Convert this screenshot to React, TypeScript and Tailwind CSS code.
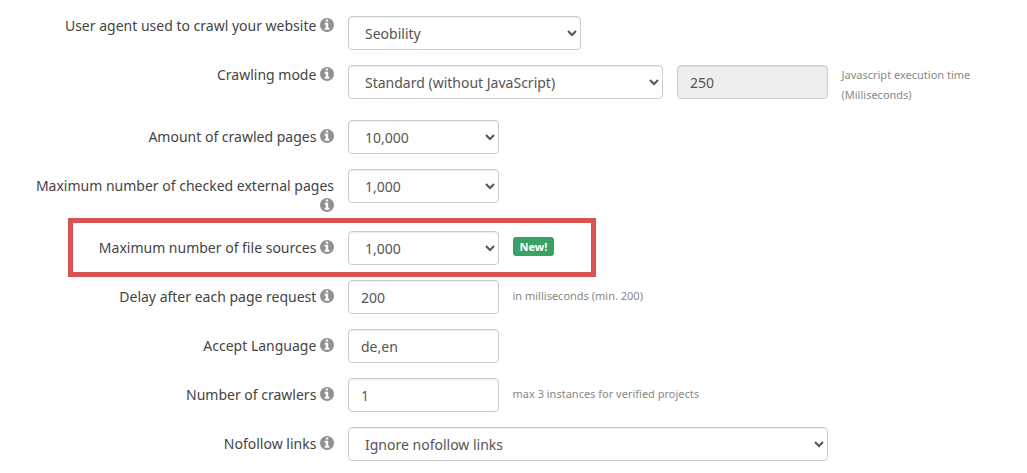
import React from "react";
import clsx from "clsx";

const controlClass =
  "block h-[34px] w-full rounded border border-[#ccc] bg-white px-3 py-1.5 text-sm text-[#555] shadow-[inset_0_1px_1px_rgba(0,0,0,0.075)] outline-none focus:border-[#66afe9] disabled:bg-[#eee]";

function InfoIcon() {
  return (
    <svg
      viewBox="0 128 1536 1536"
      className="inline-block size-3.5 align-[-1px] text-[#919191]"
      fill="currentColor"
      aria-hidden="true"
    >
      <path d="M1024 1376v-160q0-14-9-23t-23-9h-96v-512q0-14-9-23t-23-9h-320q-14 0-23 9t-9 23v160q0 14 9 23t23 9h96v320h-96q-14 0-23 9t-9 23v160q0 14 9 23t23 9h448q14 0 23-9t9-23zm-128-896v-160q0-14-9-23t-23-9h-192q-14 0-23 9t-9 23v160q0 14 9 23t23 9h192q14 0 23-9t9-23zm640 416q0 209-103 385.5t-279.5 279.5-385.5 103-385.5-103-279.5-279.5-103-385.5 103-385.5 279.5-279.5 385.5-103 385.5 103 279.5 279.5 103 385.5z" />
    </svg>
  );
}

type RowProps = {
  id: string;
  label: string;
  compact?: boolean;
  highlighted?: boolean;
  children: React.ReactNode;
};

function Row({ id, label, compact, highlighted, children }: RowProps) {
  return (
    <div className="relative grid grid-cols-12 items-start gap-x-3.5">
      <label
        htmlFor={id}
        className={clsx("col-span-4 text-right text-sm leading-5 text-[#444]", !compact && "pt-[7px]")}
      >
        {label} <InfoIcon />
      </label>
      {children}
      {highlighted && (
        <div className="pointer-events-none absolute -top-[13px] -right-[15px] -bottom-3 left-[49px] col-span-7 col-start-1 border-5 border-[#d9534f]" />
      )}
    </div>
  );
}

type SelectProps = { id: string; options: string[]; className: string };

function Select({ id, options, className }: SelectProps) {
  return (
    <div className={className}>
      <select id={id} className={controlClass}>
        {options.map((option) => (
          <option key={option}>{option}</option>
        ))}
      </select>
    </div>
  );
}

function TextField({ id, value }: { id: string; value: string }) {
  return (
    <div className="col-span-2">
      <input id={id} type="text" defaultValue={value} className={controlClass} />
    </div>
  );
}

function Hint({ className, children }: { className: string; children: React.ReactNode }) {
  return <p className={clsx("text-[11px] leading-5 text-[#888]", className)}>{children}</p>;
}

export default function App() {
  return (
    <form className="flex flex-col gap-[15px] bg-white pt-4 pr-[35px] pb-3 pl-[19px] font-['Noto_Sans',sans-serif]">
      <Row id="user-agent" label="User agent used to crawl your website" compact>
        <Select id="user-agent" className="col-span-3" options={["Seobility", "Googlebot", "Bingbot"]} />
      </Row>

      <Row id="crawling-mode" label="Crawling mode" compact>
        <Select
          id="crawling-mode"
          className="col-span-4"
          options={["Standard (without JavaScript)", "With JavaScript"]}
        />
        <div className="col-span-2">
          <input
            type="text"
            defaultValue="250"
            disabled
            aria-label="Javascript execution time (Milliseconds)"
            className={controlClass}
          />
        </div>
        <Hint className="col-span-2">Javascript execution time (Milliseconds)</Hint>
      </Row>

      <Row id="crawled-pages" label="Amount of crawled pages">
        <Select id="crawled-pages" className="col-span-2" options={["10,000", "5,000", "1,000"]} />
      </Row>

      <Row id="external-pages" label="Maximum number of checked external pages">
        <Select id="external-pages" className="col-span-2" options={["1,000", "500", "100"]} />
      </Row>

      <Row id="file-sources" label="Maximum number of file sources" highlighted>
        <Select id="file-sources" className="col-span-2" options={["1,000", "500", "100"]} />
        <div className="col-span-1 pt-1.5">
          <span className="block w-fit rounded-[3px] bg-[#38a165] px-[7px] text-[11px] leading-[19px] font-bold text-white">
            New!
          </span>
        </div>
      </Row>

      <Row id="request-delay" label="Delay after each page request">
        <TextField id="request-delay" value="200" />
        <Hint className="col-span-4 pt-1.5">in milliseconds (min. 200)</Hint>
      </Row>

      <Row id="accept-language" label="Accept Language">
        <TextField id="accept-language" value="de,en" />
      </Row>

      <Row id="crawlers" label="Number of crawlers">
        <TextField id="crawlers" value="1" />
        <Hint className="col-span-4 pt-1.5">max 3 instances for verified projects</Hint>
      </Row>

      <Row id="nofollow" label="Nofollow links">
        <Select
          id="nofollow"
          className="col-span-6"
          options={["Ignore nofollow links", "Follow nofollow links"]}
        />
      </Row>
    </form>
  );
}
